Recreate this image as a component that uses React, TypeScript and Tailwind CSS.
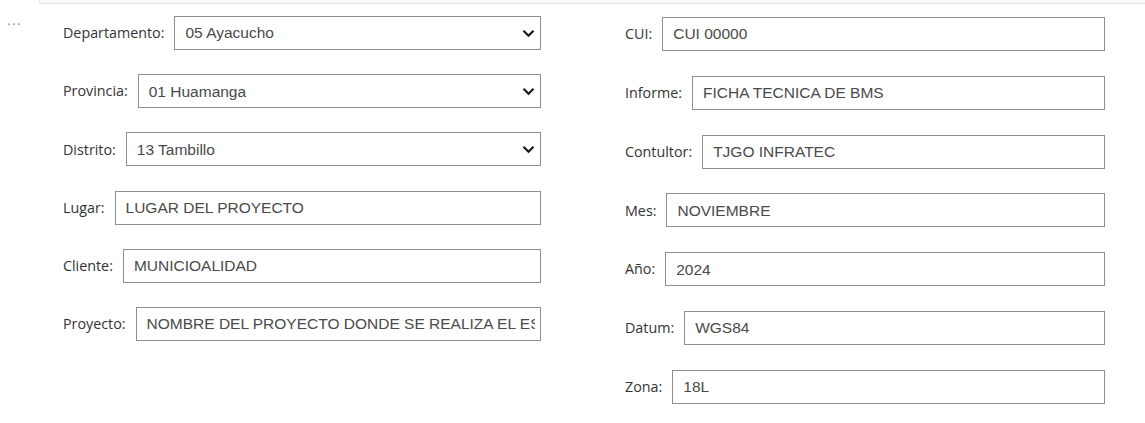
type Field = { label: string; value: string; select?: boolean };

const LEFT: Field[] = [
  { label: 'Departamento:', value: '05 Ayacucho', select: true },
  { label: 'Provincia:', value: '01 Huamanga', select: true },
  { label: 'Distrito:', value: '13 Tambillo', select: true },
  { label: 'Lugar:', value: 'LUGAR DEL PROYECTO' },
  { label: 'Cliente:', value: 'MUNICIOALIDAD' },
  { label: 'Proyecto:', value: 'NOMBRE DEL PROYECTO DONDE SE REALIZA EL ESTUDIO' },
];

const RIGHT: Field[] = [
  { label: 'CUI:', value: 'CUI 00000' },
  { label: 'Informe:', value: 'FICHA TECNICA DE BMS' },
  { label: 'Contultor:', value: 'TJGO INFRATEC' },
  { label: 'Mes:', value: 'NOVIEMBRE' },
  { label: 'Año:', value: '2024' },
  { label: 'Datum:', value: 'WGS84' },
  { label: 'Zona:', value: '18L' },
];

const Chevron = () => (
  <svg width="13" height="9" viewBox="0 0 13 9" className="shrink-0 ml-2">
    <path d="M1.5 1.8 L6.5 6.8 L11.5 1.8" fill="none" stroke="#1a1a1a" strokeWidth="2.2" />
  </svg>
);

const Row: React.FC<{ f: Field }> = ({ f }) => (
  <div className="flex items-center h-[34px]">
    <label className="text-[14.3px] text-[#333] font-['Open_Sans',sans-serif] mr-[10px] whitespace-nowrap">
      {f.label}
    </label>
    <div className="flex-1 min-w-0 h-full border border-[#8f8f8f] flex items-center pl-[10px] pr-[5px]">
      <span className="flex-1 min-w-0 whitespace-nowrap overflow-hidden text-[15.5px] text-[#4a4a4a] font-['Liberation_Sans',Arial,sans-serif]">
        {f.value}
      </span>
      {f.select && <Chevron />}
    </div>
  </div>
);

export default function App() {
  return (
    <div className="w-[1145px] h-[423px] bg-white">
      <div className="ml-[39px] h-[4px] bg-[#f8f8f8] border-b border-l border-[#e6e6e6]" />
      <div className="flex">
        <div className="w-[63px] pl-[7px] pt-[9px] text-[#888] text-[14px] font-['Liberation_Sans',sans-serif] leading-none tracking-[1px]">
          ...
        </div>
        <div className="w-[478px] flex flex-col gap-[24.2px] pt-[12px]">
          {LEFT.map((f) => (
            <Row key={f.label} f={f} />
          ))}
        </div>
        <div className="w-[84px]" />
        <div className="w-[480px] flex flex-col gap-[24.8px] pt-[13px]">
          {RIGHT.map((f) => (
            <Row key={f.label} f={f} />
          ))}
        </div>
      </div>
    </div>
  );
}
